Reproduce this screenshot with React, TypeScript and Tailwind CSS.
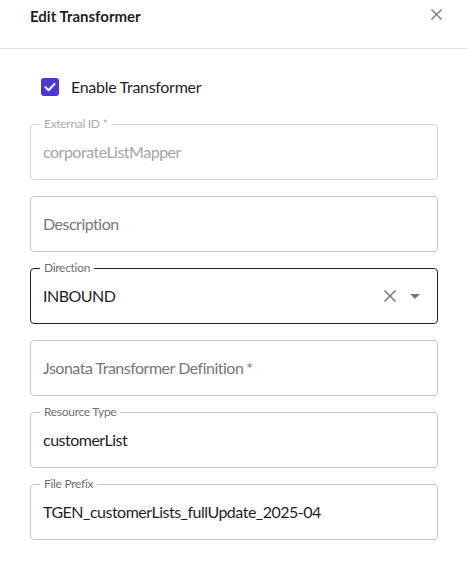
import React from 'react';

const font = { fontFamily: 'Lato, "Noto Sans", "Liberation Sans", sans-serif' };

type FieldProps = {
  label: string;
  value?: string;
  required?: boolean;
  disabled?: boolean;
  focused?: boolean;
  children?: React.ReactNode;
};

const Field: React.FC<FieldProps> = ({ label, value, required, disabled, focused, children }) => {
  const floated = value !== undefined;
  const border = focused ? 'border-[#1f1f1f]' : disabled ? 'border-[#d4d4d4]' : 'border-[#c4c4c4]';
  return (
    <div className={`relative h-14 rounded-[4px] border ${border} flex items-center pl-3 pr-2`}>
      {floated && (
        <span
          className={`absolute -top-[9px] left-[9px] bg-white px-[4px] text-[12px] leading-4 tracking-[-0.3px] ${disabled ? 'text-[#ababab]' : 'text-[#6f6f6f]'}`}
        >
          {label}
          {required && <span className="ml-[3px]">*</span>}
        </span>
      )}
      <span
        className={`flex-1 text-[16px] leading-6 tracking-[-0.5px] ${
          !floated ? 'text-[#767676]' : disabled ? 'text-[#a3a3a3]' : 'text-[#1f1f1f]'
        }`}
      >
        {floated ? value : label}
        {!floated && required && <span className="ml-[3px]">*</span>}
      </span>
      {children}
    </div>
  );
};

export default function App() {
  return (
    <div className="w-[468px] h-[569px] bg-white" style={font}>
      {/* header */}
      <div className="h-[49px] border-b border-[#e0e0e0] pl-[30px] pr-[25px] pt-[6px] flex items-start justify-between">
        <span className="text-[15px] font-bold leading-5 text-[#1f1f1f]">Edit Transformer</span>
        <button className="mt-[2px] text-[#7a7a7a]">
          <svg width="13" height="13" viewBox="0 0 14 14" fill="none" stroke="currentColor" strokeWidth="1.5">
            <path d="M1.5 1.5l11 11M12.5 1.5l-11 11" />
          </svg>
        </button>
      </div>

      {/* body */}
      <div className="px-[30px] pt-[26px]">
        <label className="flex items-center h-6 pl-[11px] gap-[12px]">
          <span className="w-[18px] h-[18px] rounded-[3px] bg-[#4b36d6] flex items-center justify-center">
            <svg width="14" height="14" viewBox="0 0 14 14" fill="none" stroke="white" strokeWidth="2" strokeLinecap="round" strokeLinejoin="round">
              <path d="M2.5 7.2l3 3 6-6.2" />
            </svg>
          </span>
          <span className="text-[16px] tracking-[-0.3px] text-[#1f1f1f]">Enable Transformer</span>
        </label>

        <div className="mt-[25px] flex flex-col gap-4">
          <Field label="External ID" required disabled value="corporateListMapper" />
          <Field label="Description" />
          <Field label="Direction" focused value="INBOUND">
            <div className="flex items-center gap-[13px] pr-[9px] text-[#767676]">
              <svg width="14" height="14" viewBox="0 0 14 14" fill="none" stroke="currentColor" strokeWidth="1.5">
                <path d="M1.5 1.5l11 11M12.5 1.5l-11 11" />
              </svg>
              <svg width="10" height="5" viewBox="0 0 10 5" fill="currentColor">
                <path d="M0 0h10L5 5z" />
              </svg>
            </div>
          </Field>
          <Field label="Jsonata Transformer Definition" required />
          <Field label="Resource Type" value="customerList" />
          <Field label="File Prefix" value="TGEN_customerLists_fullUpdate_2025-04" />
        </div>
      </div>
    </div>
  );
}
